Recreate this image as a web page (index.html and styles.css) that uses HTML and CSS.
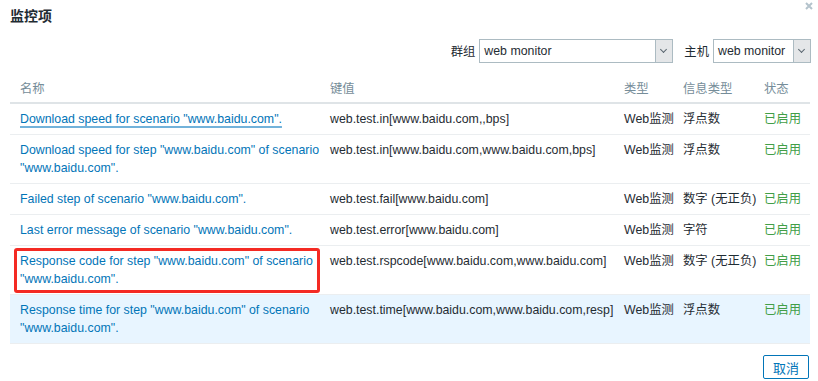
FILE: index.html
```html
<!DOCTYPE html>
<html lang="zh-CN">
<head>
    <meta charset="UTF-8">
    <title>监控项</title>
    <link rel="stylesheet" href="styles.css">
</head>
<body>
    <div class="dialog">
        <svg class="close" width="8" height="8" viewBox="0 0 8 8"><path d="M1 1L7 7M7 1L1 7" stroke="#b4c3cc" stroke-width="2"/></svg>
        <h1>监控项</h1>
        <div class="filters">
            <label>群组</label>
            <div class="select wide"><span>web monitor</span><b class="arrow"></b></div>
            <label>主机</label>
            <div class="select"><span>web monitor</span><b class="arrow"></b></div>
        </div>
        <table class="items">
            <colgroup>
                <col class="c-name">
                <col class="c-key">
                <col class="c-type">
                <col class="c-info">
                <col class="c-status">
            </colgroup>
            <thead>
                <tr>
                    <th>名称</th>
                    <th>键值</th>
                    <th>类型</th>
                    <th>信息类型</th>
                    <th>状态</th>
                </tr>
            </thead>
            <tbody>
                <tr>
                    <td><a href="#" class="focused">Download speed for scenario "www.baidu.com".</a></td>
                    <td>web.test.in[www.baidu.com,,bps]</td>
                    <td>Web监测</td>
                    <td>浮点数</td>
                    <td class="on">已启用</td>
                </tr>
                <tr>
                    <td><a href="#">Download speed for step "www.baidu.com" of scenario "www.baidu.com".</a></td>
                    <td>web.test.in[www.baidu.com,www.baidu.com,bps]</td>
                    <td>Web监测</td>
                    <td>浮点数</td>
                    <td class="on">已启用</td>
                </tr>
                <tr>
                    <td><a href="#">Failed step of scenario "www.baidu.com".</a></td>
                    <td>web.test.fail[www.baidu.com]</td>
                    <td>Web监测</td>
                    <td>数字 (无正负)</td>
                    <td class="on">已启用</td>
                </tr>
                <tr>
                    <td><a href="#">Last error message of scenario "www.baidu.com".</a></td>
                    <td>web.test.error[www.baidu.com]</td>
                    <td>Web监测</td>
                    <td>字符</td>
                    <td class="on">已启用</td>
                </tr>
                <tr>
                    <td class="marked"><a href="#">Response code for step "www.baidu.com" of scenario "www.baidu.com".</a></td>
                    <td>web.test.rspcode[www.baidu.com,www.baidu.com]</td>
                    <td>Web监测</td>
                    <td>数字 (无正负)</td>
                    <td class="on">已启用</td>
                </tr>
                <tr class="hover">
                    <td><a href="#">Response time for step "www.baidu.com" of scenario "www.baidu.com".</a></td>
                    <td>web.test.time[www.baidu.com,www.baidu.com,resp]</td>
                    <td>Web监测</td>
                    <td>浮点数</td>
                    <td class="on">已启用</td>
                </tr>
            </tbody>
        </table>
        <div class="footer">
            <button class="btn">取消</button>
        </div>
    </div>
</body>
</html>
```

FILE: styles.css
```css
body {
    margin: 0;
    background: #fff;
    font-family: "Liberation Sans", Arial, "Noto Sans CJK SC", sans-serif;
    font-size: 12.35px;
    color: #1f2c33;
}
.dialog {
    position: relative;
    width: 800px;
    margin-left: 10px;
    padding-top: 6px;
}
.close {
    position: absolute;
    top: 2px;
    right: -3px;
}
h1 {
    margin: 0;
    font-size: 14px;
    font-weight: bold;
    line-height: 20px;
}
.filters {
    display: flex;
    justify-content: flex-end;
    align-items: center;
    gap: 4px;
    margin-top: 13px;
    margin-right: -1px;
}
.filters label {
    margin-left: 7px;
}
.select {
    display: flex;
    height: 24px;
    width: 98px;
    box-sizing: border-box;
    border: 1px solid #acbbc2;
    background: #fff;
}
.select.wide {
    width: 194px;
}
.select span {
    flex: 1;
    padding-left: 4px;
    line-height: 22px;
    white-space: nowrap;
    overflow: hidden;
}
.arrow {
    position: relative;
    width: 16px;
    background: #e4e6e8;
    border-left: 1px solid #acbbc2;
}
.arrow::after {
    content: "";
    position: absolute;
    left: 5px;
    top: 7px;
    width: 4px;
    height: 4px;
    border-right: 1px solid #5a6770;
    border-bottom: 1px solid #5a6770;
    transform: rotate(45deg);
}
.items {
    width: 800px;
    margin-top: 15px;
    border-collapse: collapse;
    table-layout: fixed;
}
.c-name { width: 315px; }
.c-key { width: 294px; }
.c-type { width: 59px; }
.c-info { width: 81px; }
.c-status { width: 51px; }
.items th {
    text-align: left;
    font-weight: normal;
    color: #768d99;
    padding: 2px 5px 4px;
    line-height: 18px;
    border-bottom: 2px solid #dfe4e7;
}
.items td {
    padding: 6px 5px;
    line-height: 18px;
    vertical-align: top;
    border-bottom: 1px solid #ebeef0;
    white-space: nowrap;
}
.items th:first-child,
.items td:first-child {
    padding-left: 10px;
    padding-right: 2px;
    white-space: normal;
}
.items a {
    color: #0275b8;
    text-decoration: none;
}
.items a.focused {
    text-decoration: underline;
    text-decoration-color: #72b2da;
    text-decoration-thickness: 2px;
    text-underline-offset: 3px;
}
.items .on {
    color: #429e47;
}
.items tr.hover td {
    background: #e8f5ff;
}
.items td.marked {
    position: relative;
}
.items td.marked::after {
    content: "";
    position: absolute;
    top: 2px;
    left: 4px;
    right: 5px;
    bottom: 1px;
    border: 3px solid #f42a23;
    border-radius: 3px;
}
.footer {
    display: flex;
    justify-content: flex-end;
    margin-top: 11px;
    margin-right: 1px;
}
.btn {
    font-family: inherit;
    font-size: 13px;
    color: #0275b8;
    background: #fff;
    border: 1px solid #0275b8;
    border-radius: 2px;
    width: 46px;
    height: 24px;
    padding: 0;
}
```
